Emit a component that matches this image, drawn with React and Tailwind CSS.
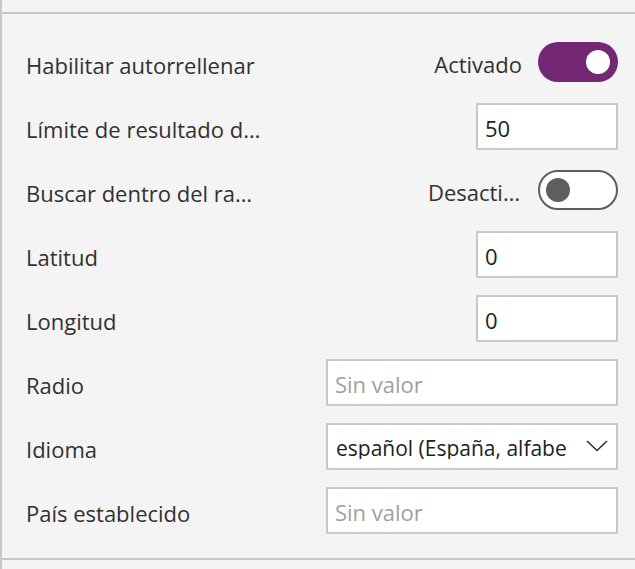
import React from "react";

const font = { fontFamily: '"Open Sans", "Noto Sans", sans-serif' };

function Label({ children }) {
  return <div className="text-[22px] text-[#323130] whitespace-nowrap leading-none pt-[5px]">{children}</div>;
}

function Row({ label, children }) {
  return (
    <div className="h-16 flex items-center justify-between">
      <Label>{label}</Label>
      {children}
    </div>
  );
}

function ToggleOn() {
  return (
    <div className="flex items-center gap-4">
      <span className="text-[22px] text-[#323130] leading-none pt-[4px]">Activado</span>
      <div className="w-20 h-10 rounded-full bg-[#742774] flex items-center justify-end pr-2">
        <div className="w-6 h-6 rounded-full bg-white" />
      </div>
    </div>
  );
}

function ToggleOff() {
  return (
    <div className="flex items-center gap-[18px]">
      <span className="text-[22px] text-[#323130] leading-none pt-[4px]">Desacti…</span>
      <div className="w-20 h-10 rounded-full bg-white border-2 border-[#605e5c] flex items-center pl-[6px]">
        <div className="w-6 h-6 rounded-full bg-[#605e5c]" />
      </div>
    </div>
  );
}

function SmallInput({ value }) {
  return (
    <div className="w-[142px] h-[47px] bg-white border-2 border-[#c8c8c8] flex items-center px-[7px] text-[22px] text-[#201f1e] leading-none pt-[4px]">
      {value}
    </div>
  );
}

function WideInput({ placeholder }) {
  return (
    <div className="w-[292px] h-[47px] bg-white border-2 border-[#c8c8c8] flex items-center px-[7px] text-[22px] text-[#a19f9d] leading-none pt-[4px]">
      {placeholder}
    </div>
  );
}

function Dropdown() {
  return (
    <div className="w-[292px] h-[47px] bg-white border-2 border-[#c8c8c8] flex items-center justify-between pl-[8px] pr-[8px] text-[21px] text-[#201f1e]">
      <div className="w-[236px] overflow-hidden whitespace-nowrap leading-none pt-[4px]">español (España, alfabe</div>
      <svg width="22" height="12" viewBox="0 0 22 12" className="shrink-0">
        <polyline points="1,1 11,10.5 21,1" fill="none" stroke="#323130" strokeWidth="1.6" />
      </svg>
    </div>
  );
}

export default function App() {
  return (
    <div className="w-[635px] h-[569px] bg-[#f4f4f4] border-l-2 border-[#c8c8c8] pt-[12px] overflow-hidden" style={font}>
      <div className="border-t-2 border-b-2 border-[#c8c8c8] py-4 pl-[24px] pr-[17px]">
        <Row label="Habilitar autorrellenar"><ToggleOn /></Row>
        <Row label="Límite de resultado d…"><SmallInput value="50" /></Row>
        <Row label="Buscar dentro del ra…"><ToggleOff /></Row>
        <Row label="Latitud"><SmallInput value="0" /></Row>
        <Row label="Longitud"><SmallInput value="0" /></Row>
        <Row label="Radio"><WideInput placeholder="Sin valor" /></Row>
        <Row label="Idioma"><Dropdown /></Row>
        <Row label="País establecido"><WideInput placeholder="Sin valor" /></Row>
      </div>
    </div>
  );
}
